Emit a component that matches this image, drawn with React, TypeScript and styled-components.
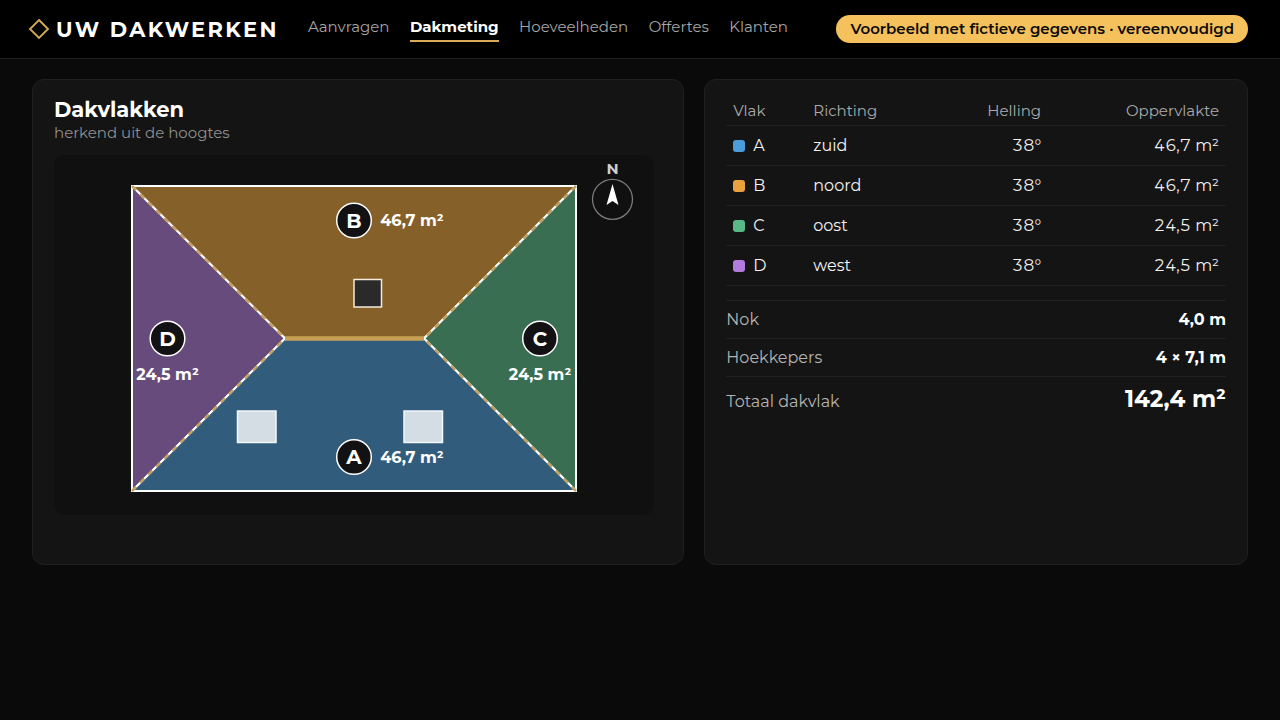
import React from 'react';
import styled, { createGlobalStyle } from 'styled-components';

const GlobalStyle = createGlobalStyle`
  *, *::before, *::after { box-sizing: border-box; }
  body {
    margin: 0;
    background: #0a0a0a;
    color: #f2f2f2;
    font-family: Montserrat, Inter, "Liberation Sans", sans-serif;
    font-size: 16px;
    line-height: 20px;
  }
`;

const Header = styled.header`
  display: flex;
  align-items: center;
  min-height: 59px;
  padding: 0 32px 0 28px;
  background: #000;
  border-bottom: 1px solid #202020;
`;

const Brand = styled.a`
  display: flex;
  align-items: center;
  gap: 6px;
  flex: 0 0 280px;
  color: #fff;
  font-size: 21px;
  line-height: 29px;
  font-weight: 700;
  letter-spacing: 0.11em;
  white-space: nowrap;
  text-decoration: none;
`;

const Nav = styled.nav`
  display: flex;
  flex: 0 1 480px;
  justify-content: space-between;
`;

const NavLink = styled.a<{ $active?: boolean }>`
  padding-bottom: 3px;
  border-bottom: 2px solid ${(p) => (p.$active ? '#d9ab5b' : 'transparent')};
  color: ${(p) => (p.$active ? '#fff' : '#a6a6a6')};
  font-size: 15px;
  font-weight: ${(p) => (p.$active ? 700 : 400)};
  text-decoration: none;
`;

const Notice = styled.span`
  margin-left: auto;
  padding: 4px 14px;
  border-radius: 14px;
  background: #f5c15c;
  color: #0a0805;
  font-size: 15px;
  font-weight: 600;
  white-space: nowrap;
`;

const Main = styled.main`
  display: grid;
  grid-template-columns: 1.2fr 1fr;
  gap: 20px;
  padding: 20px 32px;
`;

const Card = styled.section`
  min-width: 0;
  min-height: 486px;
  padding: 18px 21px;
  border: 1px solid #202020;
  border-radius: 12px;
  background: #141414;
`;

const Title = styled.h2`
  margin: 0;
  color: #fff;
  font-size: 21px;
  line-height: 23px;
  font-weight: 700;
`;

const Subtitle = styled.p`
  margin: 0 0 10px;
  color: #8f8f8f;
  font-size: 15px;
  line-height: 24px;
`;

const Plan = styled.svg`
  display: block;
  width: 100%;
  max-width: 600px;
  height: auto;
  border-radius: 10px;
  background: #101010;
`;

const Table = styled.table`
  width: 100%;
  border-collapse: collapse;
  table-layout: fixed;
`;

const HeadCell = styled.th<{ $width: string; $right?: boolean }>`
  width: ${(p) => p.$width};
  height: 27px;
  padding: 0 7px;
  border-bottom: 1px solid #202020;
  color: #ababab;
  font-size: 15px;
  font-weight: 400;
  text-align: ${(p) => (p.$right ? 'right' : 'left')};
`;

const Cell = styled.td<{ $right?: boolean }>`
  height: 40px;
  padding: 2px 7px 0;
  border-bottom: 1px solid #202020;
  text-align: ${(p) => (p.$right ? 'right' : 'left')};
  font-variant-numeric: tabular-nums;
`;

const FaceName = styled.span`
  display: flex;
  align-items: center;
  gap: 8px;
`;

const Swatch = styled.span<{ $color: string }>`
  width: 12px;
  height: 12px;
  border-radius: 3px;
  background: ${(p) => p.$color};
`;

const Totals = styled.dl`
  margin: 14px 0 0;
`;

const TotalRow = styled.div`
  display: flex;
  align-items: baseline;
  justify-content: space-between;
  padding: 9px 0 8px;
  border-top: 1px solid #202020;
`;

const TotalLabel = styled.dt`
  color: #b4b4b4;
`;

const TotalValue = styled.dd<{ $large?: boolean }>`
  margin: 0;
  color: #fff;
  font-size: ${(p) => (p.$large ? 23 : 16)}px;
  line-height: ${(p) => (p.$large ? 26 : 20)}px;
  font-weight: 700;
`;

const navItems = ['Aanvragen', 'Dakmeting', 'Hoeveelheden', 'Offertes', 'Klanten'];

const faces = [
  { id: 'A', direction: 'zuid', slope: '38°', area: '46,7 m²', color: '#4b9cdb' },
  { id: 'B', direction: 'noord', slope: '38°', area: '46,7 m²', color: '#e9a140' },
  { id: 'C', direction: 'oost', slope: '38°', area: '24,5 m²', color: '#58b987' },
  { id: 'D', direction: 'west', slope: '38°', area: '24,5 m²', color: '#b37bdc' },
];

const polygons = [
  { points: '78,31 522,31 370,183.5 231,183.5', fill: '#856028' },
  { points: '522,31 522,336 370,183.5', fill: '#3a6e53' },
  { points: '78,31 231,183.5 78,336', fill: '#684b7d' },
  { points: '78,336 231,183.5 370,183.5 522,336', fill: '#315c7b' },
];

const labels = [
  { id: 'B', area: '46,7 m²', x: 300, y: 65.5, tx: 358, ty: 65.5 },
  { id: 'A', area: '46,7 m²', x: 300, y: 302, tx: 358, ty: 302 },
  { id: 'D', area: '24,5 m²', x: 113.5, y: 183.5, tx: 113.5, ty: 219.5 },
  { id: 'C', area: '24,5 m²', x: 486, y: 183.5, tx: 486, ty: 219.5 },
];

function RoofPlan() {
  return (
    <Plan viewBox="0 0 600 360" role="img" aria-label="Plattegrond van de dakvlakken">
      {polygons.map((p) => (
        <polygon key={p.points} points={p.points} fill={p.fill} stroke="#fff" strokeWidth="2" strokeLinejoin="round" />
      ))}
      <path d="M231 183.500H370" stroke="#c9a155" strokeWidth="4.500" />
      <path
        d="M78 31L231 183.500M522 31L370 183.500M78 336L231 183.500M522 336L370 183.500"
        stroke="#c2a162"
        strokeWidth="2.500"
        strokeDasharray="6 5.4"
        fill="none"
      />
      <rect x="300" y="124.500" width="27.500" height="27.500" fill="#2a2a2a" stroke="#f5ecdc" strokeWidth="1.500" />
      <rect x="183.500" y="256" width="38.500" height="31.500" fill="#d5dde4" stroke="#f2f7fb" strokeWidth="1.500" />
      <rect x="350" y="256" width="38.500" height="31.500" fill="#d5dde4" stroke="#f2f7fb" strokeWidth="1.500" />
      {labels.map((l) => (
        <g key={l.id} fill="#fff" fontWeight="700" textAnchor="middle">
          <circle cx={l.x} cy={l.y} r="17.300" fill="#121214" stroke="#fff" strokeWidth="1.500" />
          <text x={l.x} y={l.y + 7} fontSize="20">{l.id}</text>
          <text x={l.tx} y={l.ty + 5.5} fontSize="16">{l.area}</text>
        </g>
      ))}
      <text x="558.500" y="19" fontSize="15" fontWeight="700" textAnchor="middle" fill="#cfcfcf">N</text>
      <circle cx="558.500" cy="44.300" r="20" fill="none" stroke="#7c7c7c" strokeWidth="1.300" />
      <path d="M558.500 29L564.500 50L558.500 46L552.500 50Z" fill="#fff" />
    </Plan>
  );
}

export default function App() {
  return (
    <>
      <GlobalStyle />
      <Header>
        <Brand href="#">
          <svg width="22" height="22" viewBox="0 0 22 22" aria-hidden="true">
            <path d="M11 2L20 11L11 20L2 11Z" fill="none" stroke="#d3a955" strokeWidth="1.900" />
          </svg>
          UW DAKWERKEN
        </Brand>
        <Nav>
          {navItems.map((item) => (
            <NavLink key={item} href="#" $active={item === 'Dakmeting'}>{item}</NavLink>
          ))}
        </Nav>
        <Notice>Voorbeeld met fictieve gegevens · vereenvoudigd</Notice>
      </Header>
      <Main>
        <Card>
          <Title>Dakvlakken</Title>
          <Subtitle>herkend uit de hoogtes</Subtitle>
          <RoofPlan />
        </Card>
        <Card>
          <Table>
            <thead>
              <tr>
                <HeadCell $width="16%">Vlak</HeadCell>
                <HeadCell $width="25%">Richting</HeadCell>
                <HeadCell $width="23.4%" $right>Helling</HeadCell>
                <HeadCell $width="35.6%" $right>Oppervlakte</HeadCell>
              </tr>
            </thead>
            <tbody>
              {faces.map((f) => (
                <tr key={f.id}>
                  <Cell><FaceName><Swatch $color={f.color} />{f.id}</FaceName></Cell>
                  <Cell>{f.direction}</Cell>
                  <Cell $right>{f.slope}</Cell>
                  <Cell $right>{f.area}</Cell>
                </tr>
              ))}
            </tbody>
          </Table>
          <Totals>
            <TotalRow><TotalLabel>Nok</TotalLabel><TotalValue>4,0 m</TotalValue></TotalRow>
            <TotalRow><TotalLabel>Hoekkepers</TotalLabel><TotalValue>4 × 7,1 m</TotalValue></TotalRow>
            <TotalRow><TotalLabel>Totaal dakvlak</TotalLabel><TotalValue $large>142,4 m²</TotalValue></TotalRow>
          </Totals>
        </Card>
      </Main>
    </>
  );
}
